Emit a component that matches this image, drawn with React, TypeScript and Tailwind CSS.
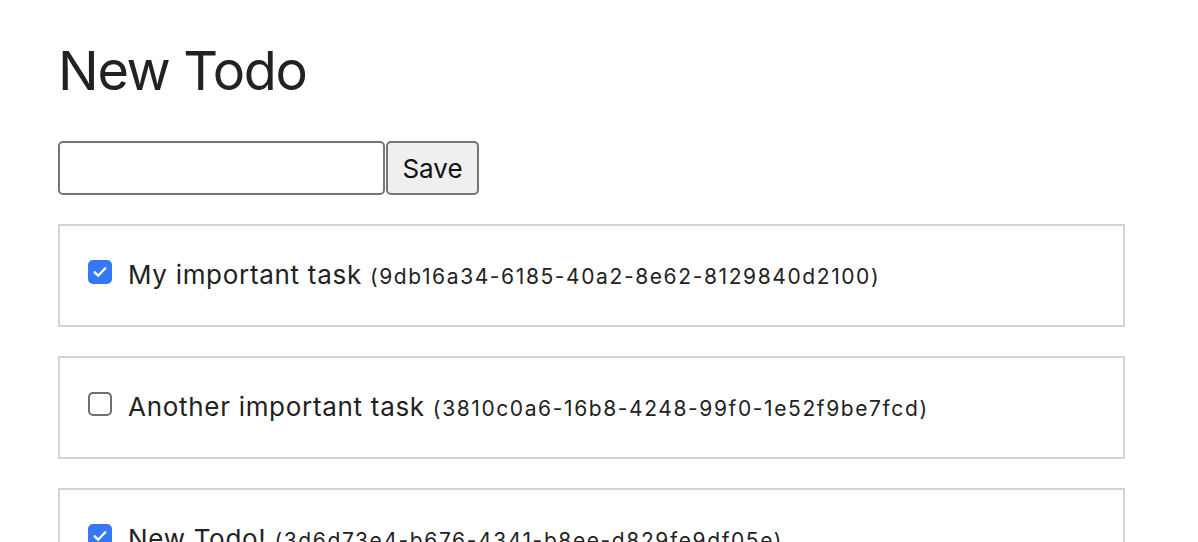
import { useState } from 'react';

type Todo = { id: string; title: string; done: boolean };

const initialTodos: Todo[] = [
  { id: '9db16a34-6185-40a2-8e62-8129840d2100', title: 'My important task', done: true },
  { id: '3810c0a6-16b8-4248-99f0-1e52f9be7fcd', title: 'Another important task', done: false },
  { id: '3d6d73e4-b676-4341-b8ee-d829fe9df05e', title: 'New Todo!', done: true },
];

function Check({ checked, onClick }: { checked: boolean; onClick: () => void }) {
  return (
    <button
      onClick={onClick}
      className={
        checked
          ? 'w-6 h-6 shrink-0 rounded-[5px] bg-[#3478f6] flex items-center justify-center'
          : 'w-6 h-6 shrink-0 rounded-[5px] border-2 border-[#6f6f6f] bg-white'
      }
    >
      {checked && (
        <svg viewBox="0 0 24 24" className="w-[18px] h-[18px]" fill="none">
          <path d="M5 12.5l4.5 4.5L19 7" stroke="white" strokeWidth="3.2" strokeLinecap="round" strokeLinejoin="round" />
        </svg>
      )}
    </button>
  );
}

export default function App() {
  const [todos, setTodos] = useState(initialTodos);
  const [text, setText] = useState('');

  const toggle = (id: string) =>
    setTodos(todos.map((t) => (t.id === id ? { ...t, done: !t.done } : t)));

  return (
    <div className="min-h-screen bg-white px-[58px] pt-[38px] text-[#222] font-['Inter','Noto_Sans',sans-serif]">
      <h1 className="text-[54px] leading-[66px] font-normal tracking-[-1.3px]">New Todo</h1>

      {/* add form */}
      <div className="flex mt-[37px]">
        <input
          value={text}
          onChange={(e) => setText(e.target.value)}
          className="w-[327px] h-[54px] border-2 border-[#767676] rounded-[5px] px-2 text-[26px] outline-none"
        />
        <button className="w-[93px] h-[54px] ml-px border-2 border-[#767676] rounded-[5px] bg-[#efefef] text-[26px] text-[#111]">
          Save
        </button>
      </div>

      {/* todo list */}
      <div className="flex flex-col gap-[29px] mt-[29px] w-[1067px]">
        {todos.map((t) => (
          <div key={t.id} className="h-[103px] border-2 border-[#d4d4d4] flex items-center pl-[28px]">
            <div className="flex items-center gap-4 -mt-2">
              <Check checked={t.done} onClick={() => toggle(t.id)} />
              <span className="text-[26px] leading-none tracking-[0.7px] mt-[6px]">
                {t.title}{' '}
                <span className="text-[21px] tracking-[1.6px]">({t.id})</span>
              </span>
            </div>
          </div>
        ))}
      </div>
    </div>
  );
}
